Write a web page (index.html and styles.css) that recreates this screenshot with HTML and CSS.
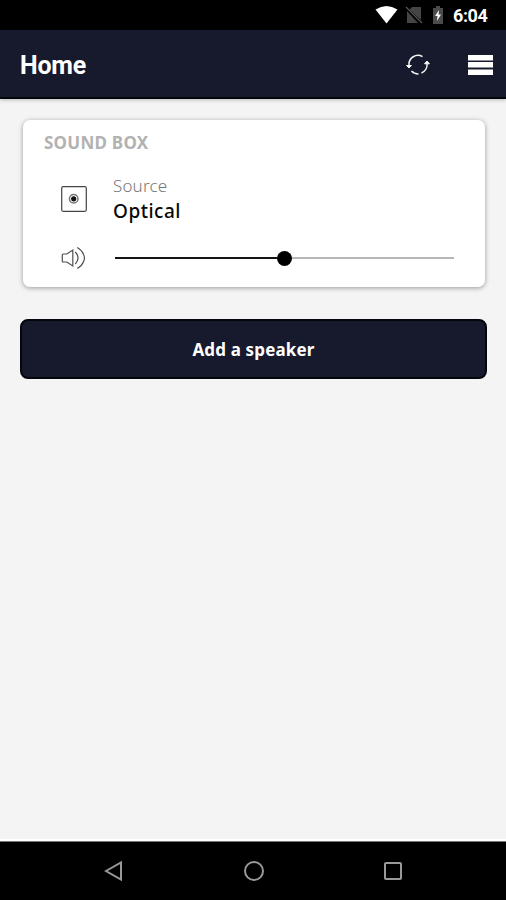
FILE: index.html
```html
<!DOCTYPE html>
<html lang="en">
<head>
<meta charset="utf-8">
<title>Home</title>
<link rel="stylesheet" href="styles.css">
</head>
<body>
<div class="status">
  <svg class="wifi" width="23" height="18" viewBox="0 0 23 18"><path d="M0.5 3.5Q11.5-3.5 22.5 3.5L11.5 17.5Z" fill="#fff"/></svg>
  <svg class="sim" width="18" height="18" viewBox="0 0 18 18"><path d="M7 1h9v13L4.5 3.500zM2 5l11 12H2z" fill="#454545"/><path d="M1 1l16 16" stroke="#555" stroke-width="1.3"/></svg>
  <svg class="battery" width="10" height="18" viewBox="0 0 10 18"><path d="M3 0h4v2h3v16H0V2h3z" fill="#4b4b4b"/><path d="M6 4L2 10h2.500L4 15l4-6.500H5.500z" fill="#fff"/></svg>
  <span class="clock">6:04</span>
</div>
<header class="bar">
  <h1>Home</h1>
  <svg class="refresh" width="26" height="22" viewBox="0 0 26 22" fill="none" stroke="#f5f5f5" stroke-width="1.500"><path d="M4 11A9 9 0 0 1 17.500 2.600M22 9.500A9 9 0 0 1 16.500 19M13.500 19.900A9 9 0 0 1 6.500 17"/><path d="M1.500 11.500h5L4 14zM19.500 9.800h5L22 7z" fill="#fff" stroke-width="1"/></svg>
  <svg class="menu" width="25" height="20" viewBox="0 0 25 20" fill="#fff"><path d="M0 0h25v5.500H0zM0 7h25v5.500H0zM0 14.500h25V20H0z"/></svg>
</header>
<main>
  <section class="card">
    <h2>SOUND BOX</h2>
    <div class="row source">
      <svg width="26" height="26" viewBox="0 0 26 26" fill="none" stroke="#444"><rect x=".7" y=".7" width="24.600" height="24.600" rx="1.500" stroke-width="1.200"/><circle cx="12.700" cy="12.800" r="4.300" stroke="#777" stroke-width="1.500"/><circle cx="12.700" cy="12.800" r="2.600" fill="#111" stroke="none"/></svg>
      <div class="labels"><span class="label">Source</span><span class="value">Optical</span></div>
    </div>
    <div class="row volume">
      <svg width="26" height="24" viewBox="0.700 0 26 24" fill="none" stroke="#505050" stroke-width="1.200"><path d="M2 9Q2 8 3 8H6.500L12.500 4V20L6.500 16H3Q2 16 2 15zM15 6Q20.500 12 15 18M17 1.500Q21.500 4 23.300 8.500Q25 12 23.300 15.500Q21.500 20 17 22.500"/></svg>
      <div class="track"><div class="fill"></div><div class="thumb"></div><div class="rest"></div></div>
    </div>
  </section>
  <button class="add">Add a speaker</button>
</main>
<nav class="nav">
  <svg width="20" height="22" viewBox="0 0 20 22"><path d="M2 11L17 2.500v17z"/></svg>
  <svg width="22" height="22" viewBox="0 0 22 22"><circle cx="11" cy="11" r="9"/></svg>
  <svg width="20" height="20" viewBox="0 0 20 20"><rect x="2" y="2" width="16" height="16" rx="1"/></svg>
</nav>
</body>
</html>
```
FILE: styles.css
```css
* { box-sizing: border-box; }
body { margin: 0; height: 900px; display: flex; flex-direction: column; background: #f4f4f4; font-family: "Noto Sans", sans-serif; }
svg { display: block; flex: none; }
h1, h2 { margin: 0; }
.status { height: 30px; background: #000; color: #fff; display: flex; align-items: center; padding-left: 375px; }
.sim { margin-left: 7px; }
.battery { margin-left: 10px; }
.clock { margin-left: 10px; font: 700 18px/30px Roboto, sans-serif; letter-spacing: -.4px; padding-top: 2px; }
.bar { height: 69px; background: #171a2c; border-bottom: 2px solid #05060d; box-shadow: 0 1px 4px rgba(0,0,0,.25); display: flex; align-items: center; padding: 2px 13px 0 20px; }
h1 { flex: 1; padding-top: 3px; color: #fff; font: 700 25px/34px Roboto, sans-serif; letter-spacing: -.2px; }
.menu { margin-left: 37px; }
main { flex: 1; padding: 21px 19px 0 20px; }
.card { height: 167px; margin: 0 2px 0 3px; background: #fff; border-radius: 7px; box-shadow: 0 1px 5px rgba(0,0,0,.38); padding: 11px 31px 0 21px; }
h2 { color: #b2b2b2; font-size: 17px; line-height: 24px; letter-spacing: .25px; }
.row { display: flex; align-items: center; padding-left: 17px; }
.source { margin-top: 18px; height: 52px; gap: 26px; }
.labels { display: flex; flex-direction: column; }
.label { color: #777; font-weight: 300; font-size: 17px; line-height: 23px; padding-bottom: 2px; letter-spacing: .15px; }
.value { color: #080808; font-weight: 500; font-size: 19px; line-height: 25px; letter-spacing: .5px; }
.volume { margin-top: 20px; height: 26px; gap: 28px; }
.track { flex: 1; display: flex; align-items: center; }
.fill { width: 162px; height: 2px; background: #151515; }
.thumb { width: 15px; height: 15px; border-radius: 50%; background: #000; }
.rest { flex: 1; height: 2px; background: #b7b7b7; }
.add { display: block; width: 100%; height: 60px; margin-top: 31.500px; padding: 2px 0 0; border: 2px solid #05060d; border-radius: 8px; background: #171a2c; color: #fff; font: 700 17px/24px "Noto Sans", sans-serif; letter-spacing: .15px; }
.nav { height: 59px; background: #000; border-top: 1px solid #777; box-shadow: 0 -2px 0 #fff; display: flex; align-items: center; justify-content: space-between; padding: 0 103px 0 104px; }
.nav svg { fill: none; stroke: #999; stroke-width: 2; }
```
